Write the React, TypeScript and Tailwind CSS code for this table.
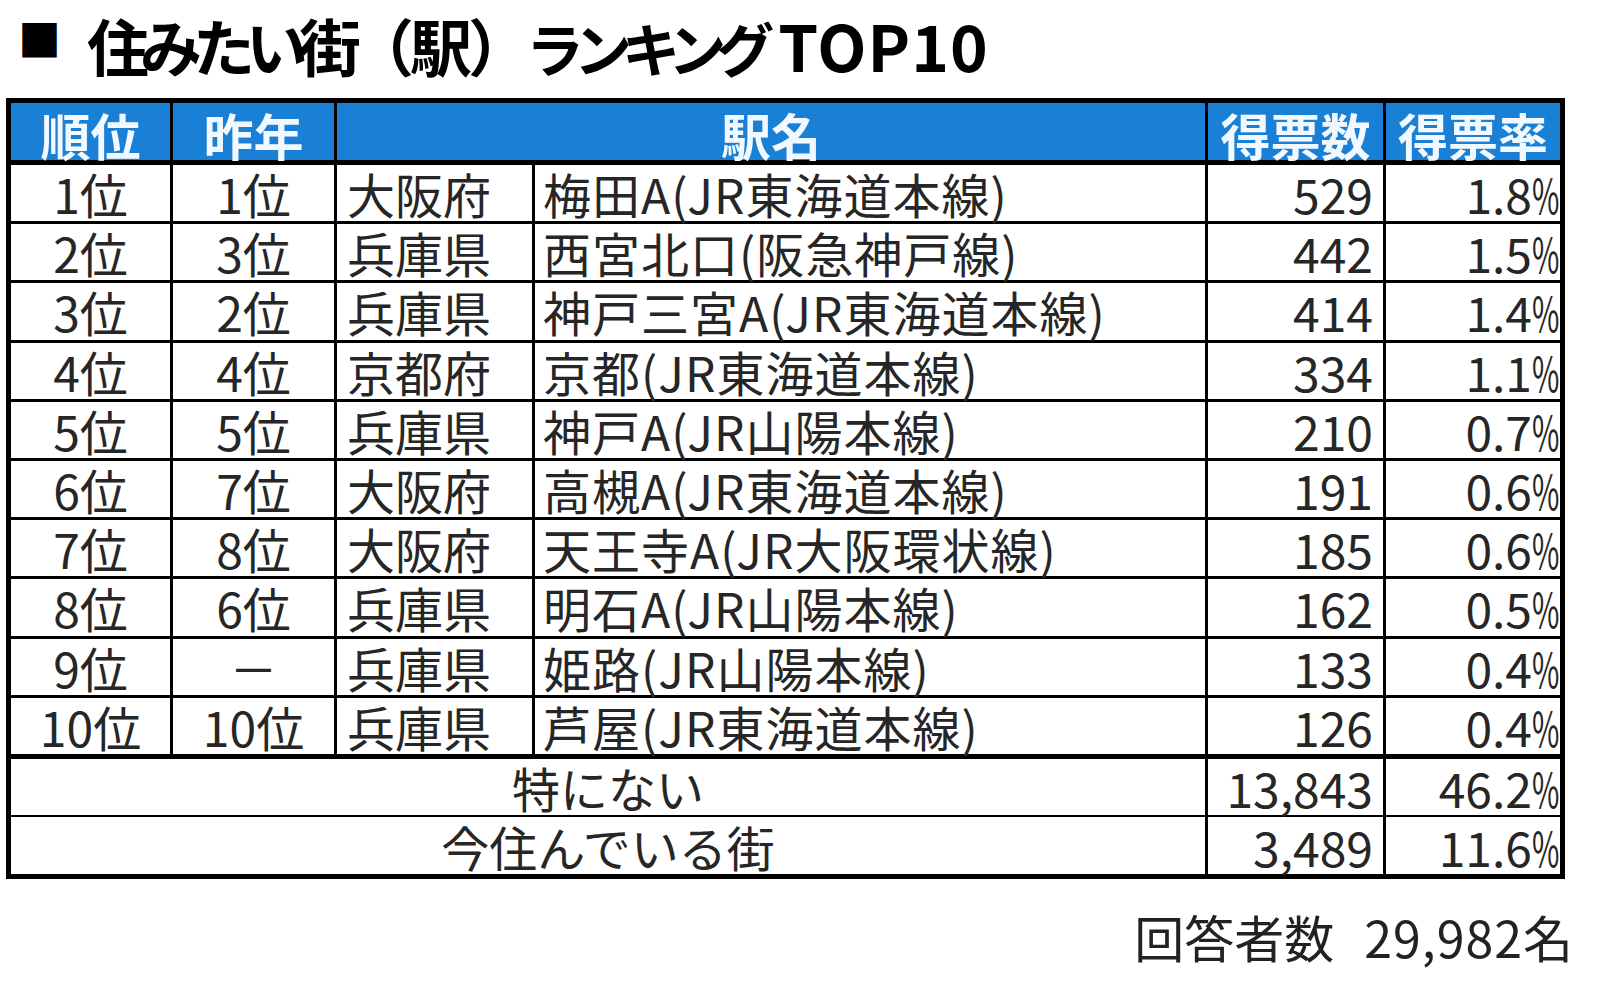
import React from "react";

type Row = {
  rank: string;
  prev: string;
  pref: string;
  station: string;
  votes: string;
  rate: string;
};

const rows: Row[] = [
  { rank: "1位", prev: "1位", pref: "大阪府", station: "梅田A(JR東海道本線)", votes: "529", rate: "1.8%" },
  { rank: "2位", prev: "3位", pref: "兵庫県", station: "西宮北口(阪急神戸線)", votes: "442", rate: "1.5%" },
  { rank: "3位", prev: "2位", pref: "兵庫県", station: "神戸三宮A(JR東海道本線)", votes: "414", rate: "1.4%" },
  { rank: "4位", prev: "4位", pref: "京都府", station: "京都(JR東海道本線)", votes: "334", rate: "1.1%" },
  { rank: "5位", prev: "5位", pref: "兵庫県", station: "神戸A(JR山陽本線)", votes: "210", rate: "0.7%" },
  { rank: "6位", prev: "7位", pref: "大阪府", station: "高槻A(JR東海道本線)", votes: "191", rate: "0.6%" },
  { rank: "7位", prev: "8位", pref: "大阪府", station: "天王寺A(JR大阪環状線)", votes: "185", rate: "0.6%" },
  { rank: "8位", prev: "6位", pref: "兵庫県", station: "明石A(JR山陽本線)", votes: "162", rate: "0.5%" },
  { rank: "9位", prev: "－", pref: "兵庫県", station: "姫路(JR山陽本線)", votes: "133", rate: "0.4%" },
  { rank: "10位", prev: "10位", pref: "兵庫県", station: "芦屋(JR東海道本線)", votes: "126", rate: "0.4%" },
];

const cols = "grid grid-cols-[159px_164px_198px_673px_178px_177px]";
const jp = { fontFamily: '"Noto Sans CJK JP", "Noto Sans", sans-serif' };

function Pct({ value }: { value: string }) {
  // the % in the original is a narrow half-width glyph
  const num = value.replace("%", "");
  return (
    <span className="whitespace-nowrap">
      {num}
      <span className="inline-block w-[26px] origin-left scale-x-[0.62] tracking-[-2px]">%</span>
    </span>
  );
}

export default function App() {
  return (
    <div className="min-h-screen w-full bg-white text-[#262626]" style={jp}>
      {/* Title */}
      <div className="flex h-[98px] items-start pl-[18px] pt-[12px] font-bold text-black">
        <span className="mt-[5px] text-[43px] leading-none tracking-[-6px]">■</span>
        <h1 className="ml-[32px] flex items-baseline text-[62px] leading-none">
          <span className="tracking-[-9px]">住みたい街</span>
          <span className="tracking-[-4px]">（駅）</span>
          <span className="text-[58px] tracking-[-10px]">ランキング</span>
          <span className="ml-[14px] text-[64px] tracking-[1px]">TOP10</span>
        </h1>
      </div>

      {/* Table */}
      <div className="ml-[6px] w-[1559px] border-[5px] border-black">
        {/* Header */}
        <div className={`${cols} h-[62px] border-b-[5px] border-black bg-[#1a80d6] text-[50px] font-bold leading-none text-[#f2f8ff]`}>
          <div className="flex items-center justify-center pt-[4px]">順位</div>
          <div className="flex items-center justify-center border-l-[3px] border-black pt-[4px]">昨年</div>
          <div className="col-span-2 flex items-center justify-center border-l-[3px] border-black pt-[4px]">駅名</div>
          <div className="flex items-center justify-center border-l-[3px] border-black pt-[4px]">得票数</div>
          <div className="flex items-center justify-center border-l-[3px] border-black pt-[4px]">得票率</div>
        </div>

        {/* Ranking rows */}
        {rows.map((r, i) => (
          <div
            key={r.rank}
            className={`${cols} text-[48px] leading-none ${
              i === rows.length - 1 ? "h-[61px] border-b-[5px]" : "h-[59.2px] border-b-[3px]"
            } border-black`}
          >
            <div className="flex items-center justify-center">{r.rank}</div>
            <div className="flex items-center justify-center border-l-[3px] border-black">{r.prev}</div>
            <div className="flex items-center border-l-[3px] border-black pl-[10px]">{r.pref}</div>
            <div className="flex items-center whitespace-nowrap border-l-[3px] border-black pl-[8px] tracking-[1px]">
              {r.station}
            </div>
            <div className="flex items-center justify-end border-l-[3px] border-black pr-[10px]">{r.votes}</div>
            <div className="flex items-center justify-end border-l-[3px] border-black pr-[2px]">
              <Pct value={r.rate} />
            </div>
          </div>
        ))}

        {/* Other answers */}
        <div className={`${cols} h-[58.5px] border-b-[2px] border-black text-[48px] leading-none`}>
          <div className="col-span-4 flex items-center justify-center">特にない</div>
          <div className="flex items-center justify-end border-l-[3px] border-black pr-[10px]">13,843</div>
          <div className="flex items-center justify-end border-l-[3px] border-black pr-[2px]">
            <Pct value="46.2%" />
          </div>
        </div>
        <div className={`${cols} h-[57px] text-[48px] leading-none`}>
          <div className="col-span-4 flex items-center justify-center">今住んでいる街</div>
          <div className="flex items-center justify-end border-l-[3px] border-black pr-[10px]">3,489</div>
          <div className="flex items-center justify-end border-l-[3px] border-black pr-[2px]">
            <Pct value="11.6%" />
          </div>
        </div>
      </div>

      {/* Respondents */}
      <div className="mt-[32px] flex w-[1574px] justify-end text-[50px] leading-none text-[#222]">
        <span>回答者数</span>
        <span className="ml-[30px] tracking-[1px]">29,982名</span>
      </div>
    </div>
  );
}
